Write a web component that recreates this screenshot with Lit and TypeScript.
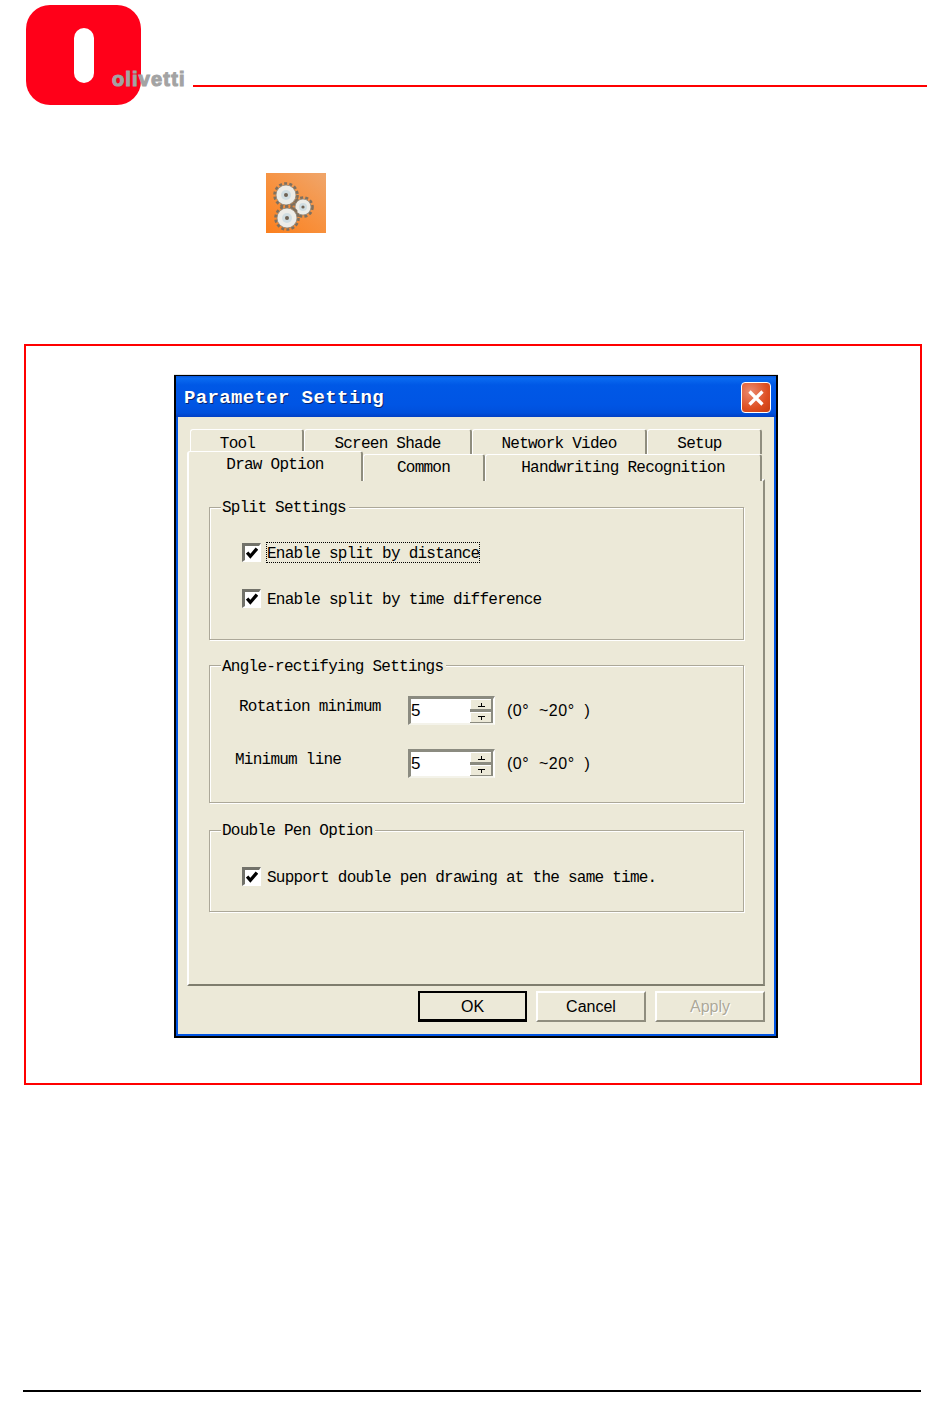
import { LitElement, html, css, svg } from "lit";
import { customElement } from "lit/decorators.js";

const check = html`<svg class="tick" viewBox="0 0 11 11" width="12" height="12"><path d="M1 5 L4 8.5 L10 1.5" fill="none" stroke="#000" stroke-width="3"/></svg>`;

const gear = (cx: number, cy: number, r: number) => svg`
  <circle cx=${cx} cy=${cy} r=${r + 1.5} fill="none" stroke="#7d6f5e" stroke-width="2.6" stroke-dasharray="3 2.2"/>
  <circle cx=${cx} cy=${cy} r=${r} fill="#ecece8" stroke="#8b857a" stroke-width="0.8"/>
  <circle cx=${cx} cy=${cy} r=${r * 0.5} fill="#d0dde2"/>
  <circle cx=${cx} cy=${cy} r=${r * 0.2} fill="#6e6254"/>`;

@customElement("app-root")
export class AppRoot extends LitElement {
  static styles = css`
    :host { display: block; width: 950px; height: 1422px; background: #fff; overflow: hidden; font-family: "Liberation Mono", monospace; color: #000; }
    .page { display: flex; flex-direction: column; height: 1422px; box-sizing: border-box; padding: 5px 23px 0 24px; }

    .header { display: flex; align-items: flex-end; height: 100px; padding-left: 2px; }
    .logo { width: 115px; height: 100px; flex: none; background: #ff0019; border-radius: 24px; display: flex; align-items: center; justify-content: center; }
    .pill { width: 20px; height: 55px; border-radius: 10px; background: #fff; }
    .wordmark { flex: none; margin: 0 0 16px -29px; font: bold 20px/20px "Liberation Sans", sans-serif; letter-spacing: 1.15px; color: #a3a3a3; -webkit-text-stroke: 1.1px #a3a3a3; width: 73px; height: 20px; position: relative; white-space: pre; }
    .rule { flex: 1; height: 2px; margin: 0 0 18px 8px; background: #f00; }

    .app-icon { display: block; width: 60px; height: 60px; margin: 68px 0 0 242px; flex: none; }

    .frame { box-sizing: border-box; width: 898px; height: 741px; margin-top: 111px; border: 2px solid #f00; padding: 29px 0 0 148px; flex: none; }

    .dialog { box-sizing: border-box; width: 604px; height: 663px; background: #0054e3; border: 2px solid #000; border-top-width: 1px; box-shadow: 0 -1px 0 #e6e6e6; display: flex; flex-direction: column; }
    .titlebar { height: 41px; flex: none; box-sizing: border-box; padding: 2px 5px 0 8px; display: flex; align-items: center; justify-content: space-between;
      background: linear-gradient(#0a57d8 0, #0a6af0 6%, #0058e6 22%, #0055e4 70%, #0050dc 90%, #0240c4 100%); }
    .title { color: #fff; font-weight: bold; font-size: 19px; letter-spacing: 0.36px; line-height: 24px; text-shadow: 1px 1px 0 #08246b; white-space: pre; }
    .close { width: 30px; height: 31px; box-sizing: border-box; border: 1px solid #fff; border-radius: 4px; background: radial-gradient(circle at 30% 30%, #ea8a70, #de4f22 60%, #c73c10); display: flex; align-items: center; justify-content: center; }

    .client { flex: 1; background: #ece9d8; margin: 0 2px 2px 2px; padding: 12px 9px 0 9px; display: flex; flex-direction: column; min-height: 0; }
    .tabs { width: 578px; font-size: 16px; letter-spacing: -0.75px; flex: none; }
    .row { display: grid; position: relative; }
    .row1 { margin-left: 3px; height: 25px; grid-template-columns: 114px 168px 175px 115px; }
    .row2 { height: 26px; grid-template-columns: 176px 122px 277px; }
    .tab { box-sizing: border-box; background: #ece9d8; border-top: 1px solid #fff; border-left: 1px solid #fff; border-right: 2px solid #8f8d7e; border-top-left-radius: 3px; border-top-right-radius: 3px; display: flex; align-items: center; justify-content: center; white-space: pre; }
    .row1 .tab { padding-top: 4px; }
    .tool { padding-right: 18px; }
    .setup { padding-right: 9px; }
    .tab.selected { border-left-width: 2px; margin-top: -3px; height: 30px; padding-bottom: 3px; position: relative; z-index: 2; }

    .panel { box-sizing: border-box; width: 578px; height: 507px; flex: none; margin-top: -1px; border-top: 2px solid #fff; border-left: 2px solid #fff; border-right: 2px solid #8f8d7e; border-bottom: 2px solid #7f7d6e; padding: 26px 19px 0 20px; font-size: 16px; letter-spacing: -0.75px; display: flex; flex-direction: column; }
    .group { box-sizing: border-box; border: 1px solid #aca899; box-shadow: 1px 1px 0 #fff, inset 1px 1px 0 #fff; display: flex; flex-direction: column; flex: none; }
    .split { height: 133px; }
    .angle { height: 138px; margin-top: 25px; }
    .double { height: 82px; margin-top: 27px; }
    .legend { align-self: flex-start; height: 18px; line-height: 18px; margin: -9px 0 0 11px; padding: 0 3px 0 1px; background: #ece9d8; white-space: pre; }
    .angle .legend { margin-top: -8px; }

    .checks { display: flex; flex-direction: column; gap: 26px; padding: 25px 0 0 32px; }
    .double .checks { padding-top: 26px; }
    .check { display: flex; align-items: center; height: 20px; white-space: pre; }
    .box { box-sizing: border-box; width: 19px; height: 19px; flex: none; margin-right: 5px; background: #fff; border-top: 3px solid #72726a; border-left: 3px solid #72726a; border-right: 2px solid #fff; border-bottom: 2px solid #fff; display: flex; align-items: center; justify-content: center; }
    .text { box-sizing: border-box; height: 21px; border: 1px dotted transparent; line-height: 20px; padding-top: 1px; padding-right: 0; }
    .text.focus { border-color: #000; }

    .spins { display: flex; flex-direction: column; gap: 24px; padding-top: 20px; }
    .spin-row { display: flex; align-items: flex-start; height: 29px; white-space: pre; }
    .lbl { box-sizing: border-box; width: 198px; line-height: 18px; padding-left: 29px; flex: none; padding-top: 2px; }
    .lbl.min { padding-left: 25px; }
    .spin { box-sizing: border-box; width: 87px; height: 29px; flex: none; display: flex; background: #fff; border-top: 3px solid #8b8b80; border-left: 3px solid #8b8b80; border-bottom: 2px solid #f4f3ea; border-right: 2px solid #fff; }
    .val { flex: 1; font: 17px/24px "Liberation Sans", sans-serif; letter-spacing: 0; padding-left: 0; }
    .btns { width: 23px; flex: none; display: flex; flex-direction: column; gap: 3px; background: #8b8b80; border-right: 2px solid #8b8b80; box-sizing: border-box; padding-bottom: 1px; }
    .sb { flex: 1; background: #ece9d8; border-top: 1px solid #fff; border-left: 1px solid #fff; display: flex; align-items: center; justify-content: center; }
    .range { font: 16px/24px "Liberation Sans", sans-serif; letter-spacing: 0.5px; margin: 3px 0 0 12px; white-space: pre; }

    .actions { display: flex; justify-content: flex-end; gap: 9px; margin-top: 5px; width: 578px; flex: none; }
    .btn { box-sizing: border-box; width: 110px; height: 31px; background: #ece9d8; border-top: 2px solid #fff; border-left: 2px solid #fff; border-right: 2px solid #8f8d7e; border-bottom: 2px solid #8f8d7e; font: 16px/27px "Liberation Sans", sans-serif; text-align: center; color: #000; padding: 0; }
    .btn.ok { width: 109px; border: 2px solid #000; border-bottom-width: 3px; }
    .btn.off { color: #aca899; text-shadow: 1px 1px 0 #fff; }

    .foot { height: 2px; width: 898px; background: #000; margin: 305px 0 0 -1px; flex: none; }
  `;

  private check(label: string, focus = false) {
    return html`<div class="check"><span class="box">${check}</span><span class="text ${focus ? "focus" : ""}">${label}</span></div>`;
  }

  private spin(label: string, cls: string) {
    const up = html`<svg width="7" height="4" viewBox="0 0 7 4"><path d="M3.5 0v3M0 3.5h7" stroke="#000" fill="none"/></svg>`;
    const down = html`<svg width="7" height="4" viewBox="0 0 7 4"><path d="M0 .5h7M3.5 1v3" stroke="#000" fill="none"/></svg>`;
    return html`<div class="spin-row">
      <span class="lbl ${cls}">${label}</span>
      <div class="spin"><span class="val">5</span><div class="btns"><span class="sb">${up}</span><span class="sb">${down}</span></div></div>
      <span class="range">(0°  ~20°  )</span>
    </div>`;
  }

  render() {
    return html`<div class="page">
      <div class="header">
        <div class="logo"><div class="pill"></div></div>
        <div class="wordmark">olivetti</div>
        <div class="rule"></div>
      </div>

      <svg class="app-icon" viewBox="0 0 60 60">
        <defs>
          <linearGradient id="ig" x1="0.9" y1="0" x2="0.1" y2="1"><stop offset="0" stop-color="#f0a468"/><stop offset="0.5" stop-color="#f79240"/><stop offset="1" stop-color="#fb8120"/></linearGradient>
          <filter id="sf"><feGaussianBlur stdDeviation="0.7"/></filter>
        </defs>
        <rect width="60" height="60" fill="url(#ig)"/>
        <g filter="url(#sf)">${gear(37, 34, 8)}${gear(20, 22, 10)}${gear(21, 45, 10)}</g>
      </svg>

      <div class="frame">
        <div class="dialog">
          <div class="titlebar">
            <span class="title">Parameter Setting</span>
            <span class="close"><svg width="18" height="18" viewBox="0 0 18 18"><path d="M2.5 2.5 L15.5 15.5 M15.5 2.5 L2.5 15.5" stroke="#fff" stroke-width="3.2" fill="none"/></svg></span>
          </div>
          <div class="client">
            <div class="tabs">
              <div class="row row1">
                <div class="tab tool">Tool</div>
                <div class="tab">Screen Shade</div>
                <div class="tab">Network Video</div>
                <div class="tab setup">Setup</div>
              </div>
              <div class="row row2">
                <div class="tab selected">Draw Option</div>
                <div class="tab">Common</div>
                <div class="tab">Handwriting Recognition</div>
              </div>
            </div>
            <div class="panel">
              <section class="group split">
                <div class="legend">Split Settings</div>
                <div class="checks">
                  ${this.check("Enable split by distance", true)}
                  ${this.check("Enable split by time difference")}
                </div>
              </section>
              <section class="group angle">
                <div class="legend">Angle-rectifying Settings</div>
                <div class="spins">
                  ${this.spin("Rotation minimum", "")}
                  ${this.spin("Minimum line", "min")}
                </div>
              </section>
              <section class="group double">
                <div class="legend">Double Pen Option</div>
                <div class="checks">
                  ${this.check("Support double pen drawing at the same time.")}
                </div>
              </section>
            </div>
            <div class="actions">
              <button class="btn ok">OK</button>
              <button class="btn">Cancel</button>
              <button class="btn off">Apply</button>
            </div>
          </div>
        </div>
      </div>

      <div class="foot"></div>
    </div>`;
  }
}
